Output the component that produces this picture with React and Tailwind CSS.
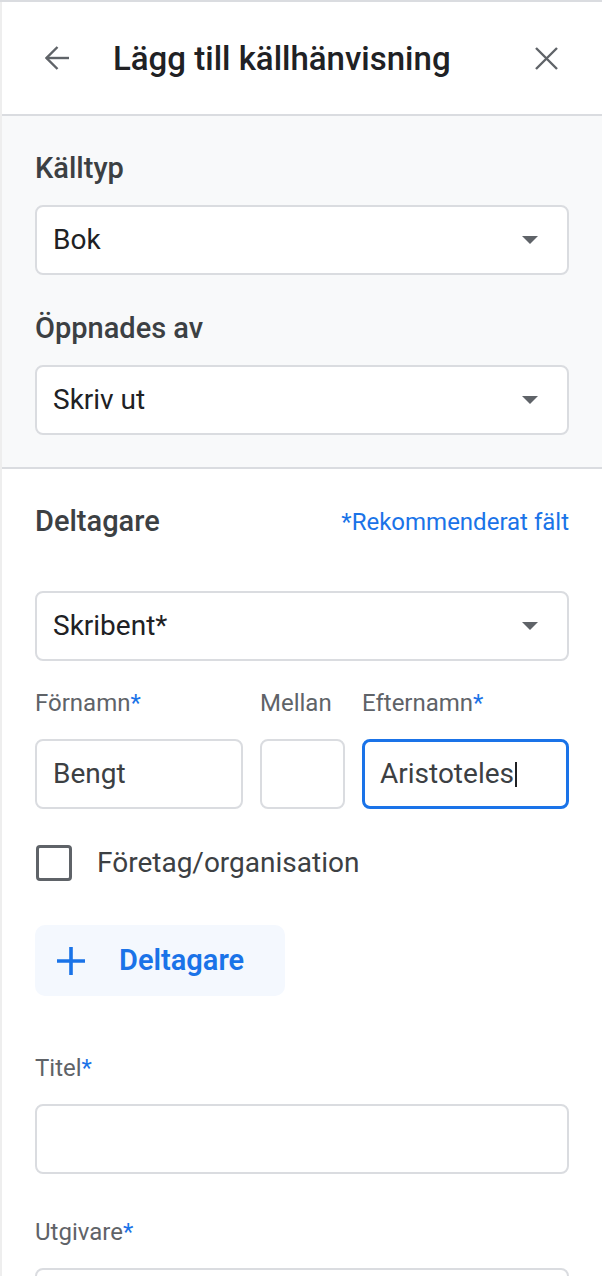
import React from "react";

const BLUE = "#1a73e8";

const Caret = () => (
  <svg width="16" height="8" viewBox="0 0 16 8" className="shrink-0">
    <path d="M0 0 L16 0 L8 8 Z" fill="#5f6368" />
  </svg>
);

const Select = ({ value }) => (
  <div className="flex h-[70px] items-center justify-between rounded-[8px] border-2 border-[#dadce0] bg-white pl-[16px] pr-[29px]">
    <span className="text-[28px] text-[#202124]">{value}</span>
    <Caret />
  </div>
);

const Star = () => <span className="text-[#1a73e8]">*</span>;

const App = () => {
  return (
    <div className="min-h-screen w-[602px] overflow-hidden border-t-2 border-[#dadce0] bg-white font-['Roboto',sans-serif]">
      <div className="min-h-[1274px] border-l-2 border-[#eeeeee]">
        {/* header */}
        <div className="flex h-[114px] items-center border-b-2 border-[#dadce0] pl-[43px] pr-[44px]">
          <svg width="24" height="24" viewBox="0 0 24 24" fill="none" stroke="#5f6368" strokeWidth="2.4">
            <path d="M24 12 H1.5" />
            <path d="M12.5 1 L1.5 12 L12.5 23" />
          </svg>
          <h1 className="ml-[44px] text-[33px] font-medium leading-none text-[#202124]">
            Lägg till källhänvisning
          </h1>
          <svg width="23" height="23" viewBox="0 0 23 23" className="ml-auto" stroke="#5f6368" strokeWidth="2.4">
            <path d="M1 1 L22 22 M22 1 L1 22" />
          </svg>
        </div>

        {/* source type */}
        <div className="border-b-2 border-[#dadce0] bg-[#f8f9fa] px-[33px] pb-[32px] pt-[34px]">
          <div className="mb-[19px] text-[29px] font-medium leading-[36px] text-[#3c4043]">Källtyp</div>
          <Select value="Bok" />
          <div className="mb-[19px] mt-[35px] text-[29px] font-medium leading-[36px] text-[#3c4043]">
            Öppnades av
          </div>
          <Select value="Skriv ut" />
        </div>

        {/* contributors */}
        <div className="px-[33px] pt-[35px]">
          <div className="flex h-[36px] items-center justify-between">
            <span className="text-[29px] font-medium text-[#3c4043]">Deltagare</span>
            <span className="text-[24px] text-[#1a73e8]">*Rekommenderat fält</span>
          </div>

          <div className="mt-[51px]">
            <Select value="Skribent*" />
          </div>

          <div className="mt-[27px] grid grid-cols-[208px_85px_1fr] gap-x-[17px]">
            <div className="text-[24px] leading-[30px] text-[#5f6368]">
              Förnamn<Star />
            </div>
            <div className="text-[24px] leading-[30px] text-[#5f6368]">Mellan</div>
            <div className="text-[24px] leading-[30px] text-[#5f6368]">
              Efternamn<Star />
            </div>

            <div className="mt-[21px] flex h-[70px] items-center rounded-[8px] border-2 border-[#dadce0] pl-[16px] text-[28px] text-[#3c4043]">
              Bengt
            </div>
            <div className="mt-[21px] h-[70px] rounded-[8px] border-2 border-[#dadce0]" />
            <div className="mt-[21px] flex h-[70px] items-center rounded-[8px] border-[3px] border-[#1a73e8] pl-[15px] text-[28px] text-[#3c4043]">
              Aristoteles
              <span className="ml-px inline-block h-[25px] w-[2px] bg-[#202124]" />
            </div>
          </div>

          <div className="mt-[36px] flex h-[36px] items-center">
            <div className="ml-[1px] h-[36px] w-[36px] rounded-[4px] border-[3px] border-[#5f6368]" />
            <span className="ml-[25px] text-[28px] leading-[36px] text-[#3c4043]">Företag/organisation</span>
          </div>

          <button className="mt-[44px] flex h-[71px] w-[250px] items-center rounded-[10px] bg-[#f4f8fe] pl-[22px]">
            <svg width="28" height="28" viewBox="0 0 28 28" stroke={BLUE} strokeWidth="3.6">
              <path d="M14 0 V28 M0 14 H28" />
            </svg>
            <span className="ml-[34px] text-[29px] font-semibold leading-none text-[#1a73e8]">Deltagare</span>
          </button>

          <div className="mt-[57px] text-[24px] leading-[30px] text-[#5f6368]">
            Titel<Star />
          </div>
          <div className="mt-[21px] h-[70px] rounded-[8px] border-2 border-[#dadce0]" />

          <div className="mt-[43px] text-[24px] leading-[30px] text-[#5f6368]">
            Utgivare<Star />
          </div>
          <div className="mt-[21px] h-[70px] rounded-[8px] border-2 border-[#dadce0]" />
        </div>
      </div>
    </div>
  );
};

export default App;
